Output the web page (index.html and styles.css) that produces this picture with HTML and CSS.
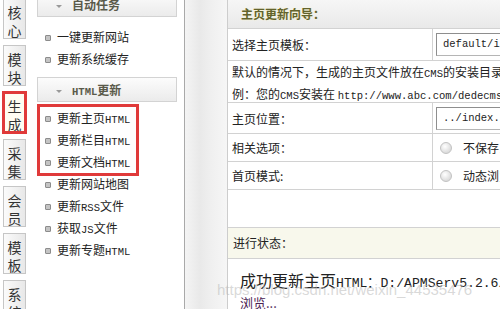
FILE: index.html
```html
<!DOCTYPE html>
<html lang="zh-CN">
<head>
    <meta charset="UTF-8">
    <title>生成 - 主页更新向导</title>
    <link rel="stylesheet" href="styles.css">
</head>
<body>
    <div class="page">
        <div class="tabs">
            <div class="tab">核<br>心</div>
            <div class="tab">模<br>块</div>
            <div class="tab on">生<br>成</div>
            <div class="tab">采<br>集</div>
            <div class="tab">会<br>员</div>
            <div class="tab">模<br>板</div>
            <div class="tab">系<br>统</div>
        </div>

        <div class="menu">
            <div class="menu-head head-top"><span class="arrow"></span>自动任务</div>
            <div class="items">
                <div class="item"><span class="dot"></span>一键更新网站</div>
                <div class="item"><span class="dot"></span>更新系统缓存</div>
            </div>

            <div class="menu-head"><span class="arrow"></span><span class="en">HTML</span>更新</div>
            <div class="items second">
                <div class="mark">
                    <div class="item"><span class="dot"></span>更新主页<span class="en">HTML</span></div>
                    <div class="item"><span class="dot"></span>更新栏目<span class="en">HTML</span></div>
                    <div class="item"><span class="dot"></span>更新文档<span class="en">HTML</span></div>
                </div>
                <div class="item"><span class="dot"></span>更新网站地图</div>
                <div class="item"><span class="dot"></span>更新<span class="en">RSS</span>文件</div>
                <div class="item"><span class="dot"></span>获取<span class="en">JS</span>文件</div>
                <div class="item"><span class="dot"></span>更新专题<span class="en">HTML</span></div>
            </div>
        </div>

        <div class="split"></div>

        <div class="main">
            <div class="head">主页更新向导：</div>

            <div class="row r1">
                <div class="lab">选择主页模板：</div>
                <div class="val"><span class="field en">default/index.htm</span></div>
            </div>

            <div class="row r2">
                <div class="note">
                    默认的情况下，生成的主页文件放在<span class="en">CMS</span>的安装目录，如果你的系统安装在子目录<br>
                    例：您的<span class="en">CMS</span>安装在 <span class="en">http://www.abc.com/dedecms/</span>
                </div>
            </div>

            <div class="row r3">
                <div class="lab">主页位置：</div>
                <div class="val"><span class="field en">../index.html</span></div>
            </div>

            <div class="row r4">
                <div class="lab">相关选项：</div>
                <div class="val"><span class="radio"></span>不保存当前选择的模板</div>
            </div>

            <div class="row r5">
                <div class="lab">首页模式:</div>
                <div class="val"><span class="radio"></span>动态浏览</div>
            </div>

            <div class="row blank"></div>

            <div class="status">进行状态：</div>

            <div class="result">
                <div class="done">成功更新主页<span class="en">HTML：D:/APMServ5.2.6/www/htdocs/index.html</span></div>
                <a class="browse" href="#">浏览...</a>
            </div>
        </div>
    </div>

    <div class="watermark">https://blog.csdn.net/weixin_44535476</div>
</body>
</html>
```

FILE: styles.css
```css
body {
    margin: 0;
    width: 500px;
    height: 309px;
    overflow: hidden;
    position: relative;
    font: 12px "Noto Sans CJK SC", sans-serif;
    color: #222;
    background: #fff;
}

.en {
    font-family: "Liberation Mono", monospace;
    font-size: 0.88em;
}

.page {
    display: flex;
    height: 309px;
}

/* left tab column */
.tabs {
    width: 30px;
    flex: none;
    margin-top: -2px;
}

.tab {
    box-sizing: border-box;
    width: 23px;
    height: 41px;
    margin: 0 0 6px 3px;
    padding-top: 4px;
    border: 1px solid #c6c6c6;
    background: linear-gradient(to right, #fbfbfb, #e8e8e8);
    text-align: center;
    font-size: 14px;
    line-height: 18px;
    color: #333;
}

.tab.on {
    background: #fffdf2;
    border: 1px dotted #c9b98a;
    outline: 3px solid #e03a3a;
    outline-offset: -2px;
}

/* menu column */
.menu {
    width: 154px;
    flex: none;
}

.menu-head {
    box-sizing: border-box;
    width: 140px;
    height: 25px;
    margin-left: 7px;
    padding-left: 18px;
    border: 1px solid #d3d3d3;
    background: linear-gradient(#fcfcfc, #ebebeb);
    font-weight: bold;
    color: #5a5a4a;
    line-height: 23px;
}

.head-top {
    margin-top: -8px;
}

.arrow {
    display: inline-block;
    vertical-align: middle;
    width: 0;
    height: 0;
    border-left: 3px solid transparent;
    border-right: 3px solid transparent;
    border-top: 3px solid #999;
    margin-right: 10px;
}

.items {
    padding: 9px 0 7px;
}

.items.second {
    padding-top: 5px;
}

.item {
    height: 22px;
    line-height: 22px;
    padding-left: 15px;
    white-space: nowrap;
}

.dot {
    display: inline-block;
    vertical-align: middle;
    box-sizing: border-box;
    width: 6px;
    height: 6px;
    margin: -2px 6px 0 0;
    border: 1px solid #8c8c8c;
    border-radius: 1px;
    background: #c4c4c4;
}

.mark {
    width: 96px;
    margin-left: 10px;
    outline: 3px solid #e03a3a;
}

.mark .item {
    padding-left: 5px;
}

/* grey strip between menu and content */
.split {
    box-sizing: border-box;
    width: 43px;
    flex: none;
    border-left: 1px solid #a9a9a9;
    background: linear-gradient(to right, #f4f4f4, #e9e9e9 35%, #efefef 60%, #f6f6f6);
}

/* content */
.main {
    flex: 1;
    min-width: 0;
    overflow: hidden;
    border-left: 1px solid #cdcdcd;
    white-space: nowrap;
}

.head {
    box-sizing: border-box;
    height: 29px;
    padding-left: 13px;
    border-bottom: 1px solid #d2d2d2;
    background: linear-gradient(#f6f6f6, #e9e9e9);
    line-height: 27px;
    font-weight: bold;
    color: #63632c;
    text-shadow: 0 0 2px #fbf6c4;
}

.row {
    box-sizing: border-box;
    display: flex;
    border-bottom: 1px solid #d2d2d2;
}

.r1 { height: 32px; }
.r2 { height: 42px; }
.r3 { height: 31px; }
.r4 { height: 28px; }
.r5 { height: 28px; }
.blank { height: 38px; }

.lab {
    box-sizing: border-box;
    width: 205px;
    flex: none;
    padding-left: 4px;
    border-right: 1px solid #d2d2d2;
    display: flex;
    align-items: center;
}

.val {
    padding-left: 3px;
    display: flex;
    align-items: center;
}

.note {
    padding: 1px 0 0 4px;
    line-height: 20px;
}

.field {
    box-sizing: border-box;
    display: block;
    width: 130px;
    height: 23px;
    padding-left: 6px;
    border: 1px solid #b5b5b5;
    border-top-color: #8e8e8e;
    border-left-color: #8e8e8e;
    font-size: 10.5px;
    line-height: 21px;
    color: #222;
    overflow: hidden;
}

.radio {
    box-sizing: border-box;
    width: 12px;
    height: 12px;
    margin: 0 11px 0 4px;
    border: 1px solid #c2c2c2;
    border-radius: 50%;
    background: radial-gradient(circle at 40% 35%, #fff, #dcdcdc 70%);
}

.status {
    box-sizing: border-box;
    height: 31px;
    padding-left: 5px;
    border-bottom: 1px solid #d2d2d2;
    background: #f8f8ec;
    line-height: 30px;
}

.result {
    padding: 11px 0 0 12px;
}

.done {
    font-size: 16px;
    line-height: 20px;
}

.done .en {
    font-size: 0.82em;
}

.browse {
    display: inline-block;
    font-size: 13px;
    line-height: 16px;
    color: #4b2352;
}

.watermark {
    position: absolute;
    left: 217px;
    top: 281px;
    font: 15px "Liberation Sans", sans-serif;
    color: rgba(185, 185, 185, 0.55);
    white-space: nowrap;
}
```
